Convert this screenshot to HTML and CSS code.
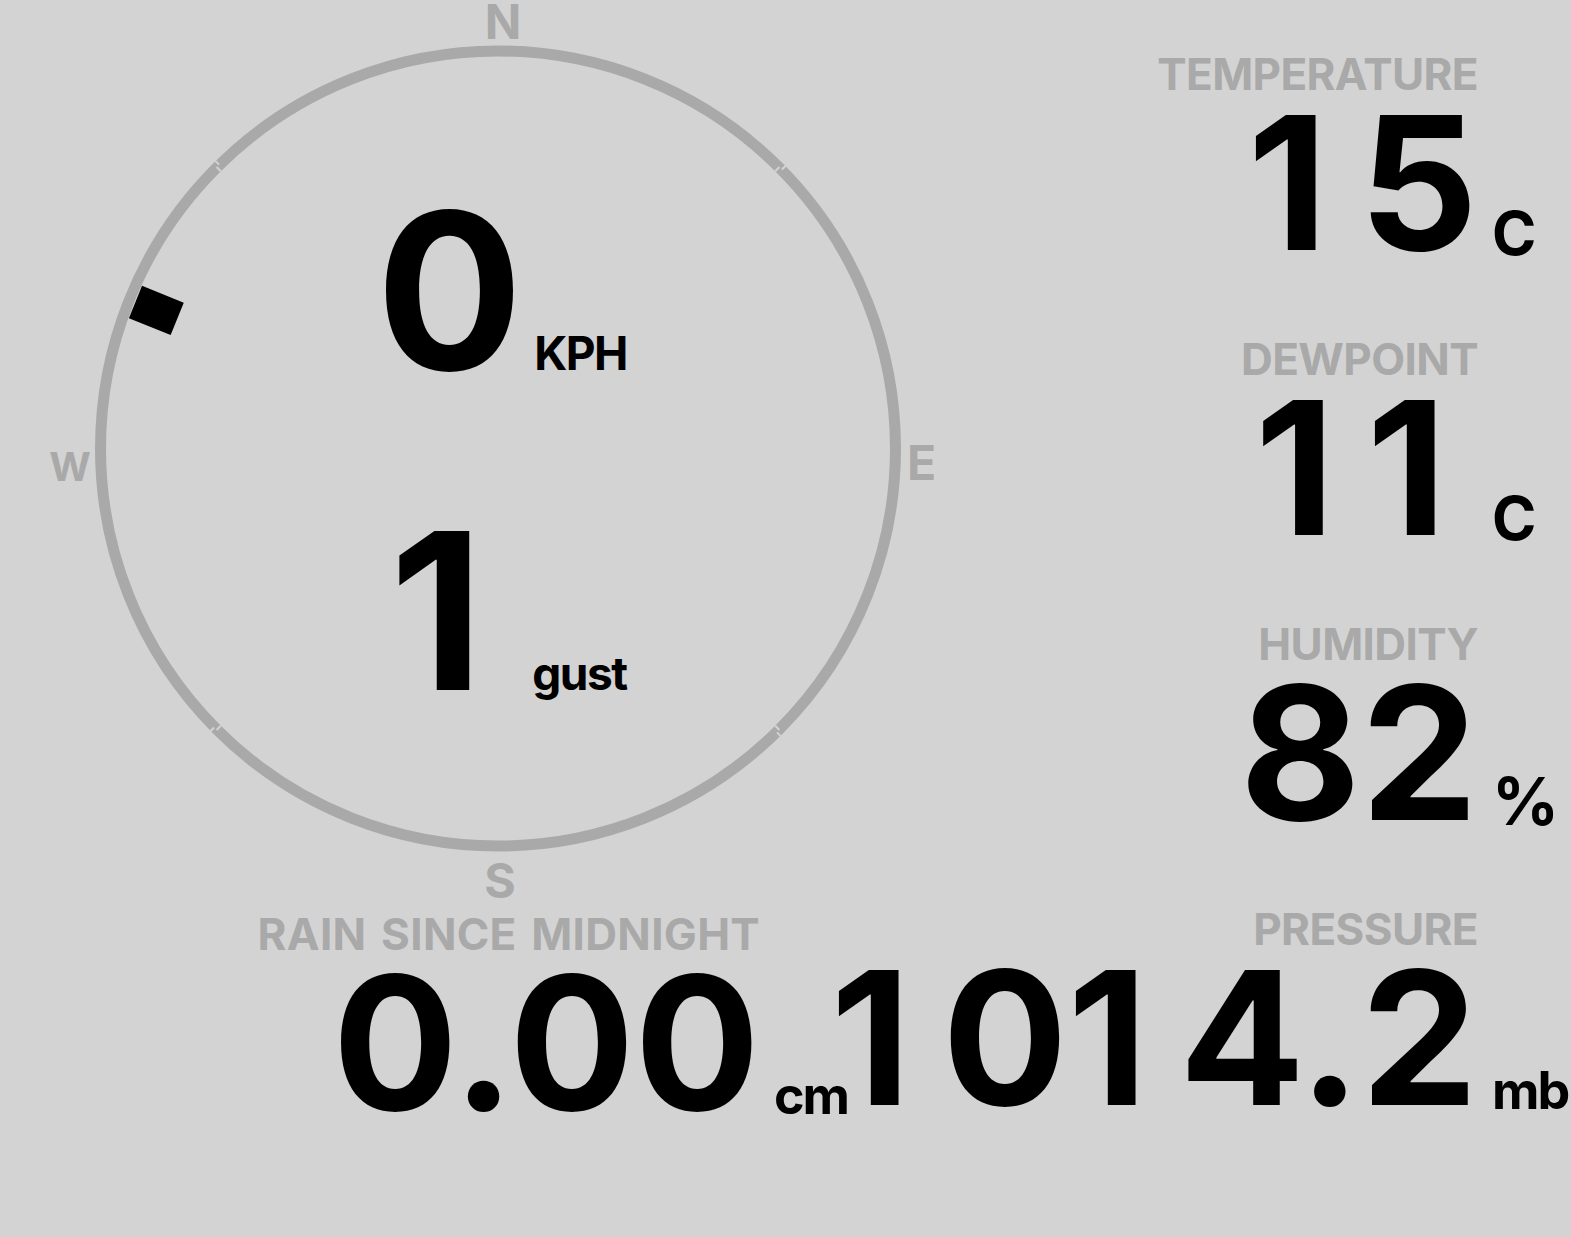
FILE: index.html
```html
<!DOCTYPE html>
<html lang="en">
<head>
<meta charset="utf-8">
<title>Weather</title>
<link rel="stylesheet" href="styles.css">
</head>
<body>
<main class="board">
  <section class="top">
    <div class="compass">
      <svg class="compass-dial" viewBox="0 0 996 907" width="996" height="907">
        <circle class="ring" cx="498" cy="448.5" r="397.5"/>
        <g class="notches">
          <rect x="497" y="50.5" width="2" height="6" transform="rotate(45 498 448.5)"/>
          <rect x="497" y="44.5" width="2" height="6" transform="rotate(45.5 498 448.5)"/>
          <rect x="497" y="50.5" width="2" height="6" transform="rotate(135 498 448.5)"/>
          <rect x="497" y="44.5" width="2" height="6" transform="rotate(135.5 498 448.5)"/>
          <rect x="497" y="50.5" width="2" height="6" transform="rotate(225 498 448.5)"/>
          <rect x="497" y="44.5" width="2" height="6" transform="rotate(225.5 498 448.5)"/>
          <rect x="497" y="50.5" width="2" height="6" transform="rotate(315 498 448.5)"/>
          <rect x="497" y="44.5" width="2" height="6" transform="rotate(315.5 498 448.5)"/>
        </g>
        <rect class="needle" x="480.5" y="57.5" width="35" height="45" transform="rotate(292 498 448.5)"/>
        <text class="cardinal" x="503" y="39" text-anchor="middle">N</text>
        <text class="cardinal" x="907" y="480">E</text>
        <text class="cardinal" x="500" y="898" text-anchor="middle">S</text>
        <text class="cardinal cardinal-w" x="70" y="481" text-anchor="middle">W</text>
      </svg>
      <div class="readouts">
        <div class="readout readout-speed"><span class="readout-value">0</span><span class="readout-unit">KPH</span></div>
        <div class="readout readout-gust"><span class="readout-value"><span class="fig">1</span></span><span class="readout-unit">gust</span></div>
      </div>
    </div>
    <div class="stats">
      <div class="stat">
        <div class="stat-label">TEMPERATURE</div>
        <div class="stat-value"><span class="fig">1</span>5</div>
        <div class="stat-unit">C</div>
      </div>
      <div class="stat">
        <div class="stat-label">DEWPOINT</div>
        <div class="stat-value"><span class="fig">1</span><span class="fig">1</span></div>
        <div class="stat-unit">C</div>
      </div>
      <div class="stat">
        <div class="stat-label">HUMIDITY</div>
        <div class="stat-value">82</div>
        <div class="stat-unit stat-unit-pct">%</div>
      </div>
    </div>
  </section>
  <section class="bottom">
    <div class="stat stat-rain">
      <div class="stat-label stat-label-wide">RAIN SINCE MIDNIGHT</div>
      <div class="stat-value">0.00</div>
      <div class="stat-unit stat-unit-sm">cm</div>
    </div>
    <div class="stat stat-pressure">
      <div class="stat-label">PRESSURE</div>
      <div class="stat-value"><span class="fig">1</span>0<span class="fig">1</span>4.2</div>
      <div class="stat-unit stat-unit-sm">mb</div>
    </div>
  </section>
</main>
</body>
</html>
```
FILE: styles.css
```css
html, body {
  margin: 0;
  padding: 0;
  background: #d3d3d3;
}

body {
  font-family: "Inter", "Roboto", "Liberation Sans", sans-serif;
  font-weight: 700;
  color: #000;
}

.board {
  width: 1571px;
  height: 1237px;
  overflow: hidden;
}

.top {
  display: flex;
  align-items: flex-start;
}

/* tabular-width figure one (no foot) */
.fig {
  display: inline-block;
  width: 0.6em;
  text-align: left;
}

/* Compass */
.compass {
  position: relative;
  flex: 0 0 996px;
  width: 996px;
  height: 907px;
}

.compass-dial {
  position: absolute;
  left: 0;
  top: 0;
  display: block;
  overflow: visible;
}

.ring {
  fill: none;
  stroke: #a9a9a9;
  stroke-width: 11;
}

.notches rect {
  fill: #d3d3d3;
}

.needle {
  fill: #000;
}

.cardinal {
  fill: #a9a9a9;
  font-family: "Inter", "Roboto", "Liberation Sans", sans-serif;
  font-weight: 700;
  font-size: 48px;
}

.cardinal-w {
  font-size: 40px;
}

.readouts {
  position: relative;
  display: flex;
  flex-direction: column;
  align-items: center;
  gap: 102px;
  padding-top: 182px;
}

.readout {
  display: flex;
  align-items: baseline;
  gap: 18px;
}

.readout-speed {
  padding-left: 7px;
  gap: 11px;
}

.readout-gust {
  padding-left: 20px;
  gap: 12px;
}

.readout-value {
  font-size: 218px;
  line-height: 218px;
}

.readout-unit {
  font-size: 46px;
  line-height: 1;
  letter-spacing: -1.5px;
}

/* Stats */
.stats {
  flex: 1;
  display: flex;
  flex-direction: column;
  align-items: flex-end;
  padding-top: 52px;
  gap: 71px;
}

.stat {
  display: grid;
  grid-template-columns: auto 93px;
  align-items: baseline;
}

.stat-label {
  grid-column: 1;
  grid-row: 1;
  justify-self: end;
  font-size: 44px;
  line-height: 44px;
  letter-spacing: -0.6px;
  word-spacing: 4px;
  color: #a9a9a9;
}

.stat-label-wide {
  letter-spacing: 0.3px;
}

.stat-value {
  grid-column: 1;
  grid-row: 2;
  justify-self: end;
  font-size: 186px;
  line-height: 166px;
  margin-top: 4px;
}

.stat-unit {
  grid-column: 2;
  grid-row: 2;
  align-self: end;
  font-size: 60px;
  line-height: 1;
  padding-left: 14px;
  padding-bottom: 3px;
  white-space: nowrap;
}

.stat-unit-pct {
  font-size: 66px;
  padding-bottom: 2px;
}

.stat-unit-sm {
  font-size: 52px;
  letter-spacing: -2px;
  padding-bottom: 4px;
}

.bottom {
  display: flex;
  align-items: flex-start;
}

.stat-rain {
  grid-template-columns: 560px 60px;
  margin-left: 200px;
  margin-top: 5px;
}

.stat-pressure {
  margin-left: auto;
}
```
